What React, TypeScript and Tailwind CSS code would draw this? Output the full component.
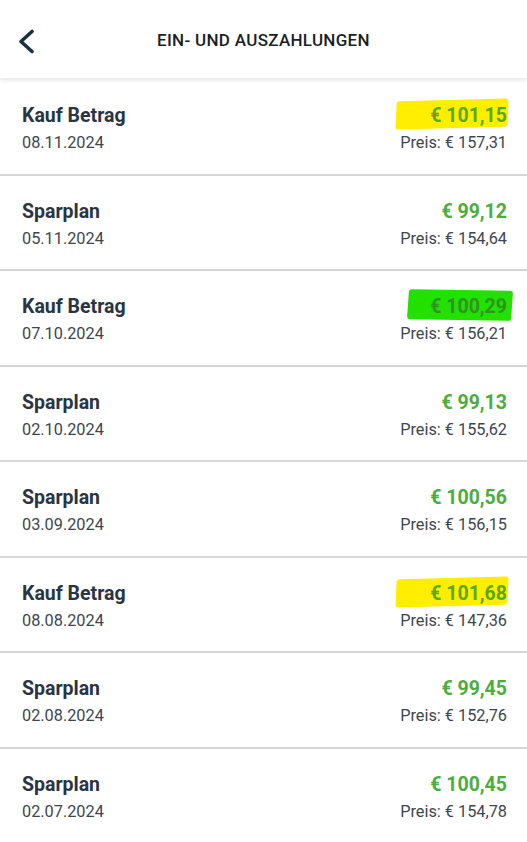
type Tx = {
  title: string;
  date: string;
  amount: string;
  price: string;
  mark?: "yellow" | "green";
};

const ROWS: Tx[] = [
  { title: "Kauf Betrag", date: "08.11.2024", amount: "€ 101,15", price: "Preis: € 157,31", mark: "yellow" },
  { title: "Sparplan", date: "05.11.2024", amount: "€ 99,12", price: "Preis: € 154,64" },
  { title: "Kauf Betrag", date: "07.10.2024", amount: "€ 100,29", price: "Preis: € 156,21", mark: "green" },
  { title: "Sparplan", date: "02.10.2024", amount: "€ 99,13", price: "Preis: € 155,62" },
  { title: "Sparplan", date: "03.09.2024", amount: "€ 100,56", price: "Preis: € 156,15" },
  { title: "Kauf Betrag", date: "08.08.2024", amount: "€ 101,68", price: "Preis: € 147,36", mark: "yellow" },
  { title: "Sparplan", date: "02.08.2024", amount: "€ 99,45", price: "Preis: € 152,76" },
  { title: "Sparplan", date: "02.07.2024", amount: "€ 100,45", price: "Preis: € 154,78" },
];

function Amount({ tx }: { tx: Tx }) {
  const color =
    tx.mark === "green" ? "text-[#2f9420]" : tx.mark === "yellow" ? "text-[#5aa912]" : "text-[#4cad3f]";
  return (
    <span className={`relative inline-block text-[19.5px] font-bold leading-6 ${color}`}>
      {tx.mark === "yellow" && (
        <span className="absolute -left-[34px] -right-[1px] -top-[4px] -bottom-[0px] bg-[#ffee00] rounded-[3px] -rotate-[1.5deg] skew-x-[-4deg]" />
      )}
      {tx.mark === "green" && (
        <span className="absolute -left-[22px] -right-[5px] -top-[5px] -bottom-[1px] bg-[#22e000] rounded-[3px] rotate-[1deg] skew-x-[-3deg]" />
      )}
      <span className="relative">{tx.amount}</span>
    </span>
  );
}

export default function App() {
  return (
    <div
      className="w-[527px] min-h-[842px] bg-white overflow-hidden"
      style={{ fontFamily: "Roboto, 'Noto Sans', sans-serif" }}
    >
      <header className="relative h-[79px] flex items-center justify-center shadow-[0_2px_4px_rgba(0,0,0,0.08)] border-b border-[#ececec]">
        <button className="absolute left-[17px] top-[29px] text-[#1c2f45]">
          <svg width="20" height="25" viewBox="0 0 20 25" fill="none">
            <polyline
              points="15,2.5 4,12.5 15,22.5"
              stroke="currentColor"
              strokeWidth="3.6"
              strokeLinecap="round"
              strokeLinejoin="round"
            />
          </svg>
        </button>
        <h1 className="text-[17px] font-medium text-[#1b1f24] tracking-[0.3px] mt-[3px]">
          EIN- UND AUSZAHLUNGEN
        </h1>
      </header>
      <div className="mt-[1px]">
        {ROWS.map((tx, i) => (
          <div
            key={i}
            className="h-[95.5px] flex items-center justify-between pl-[22px] pr-[20px] pt-[4px] border-b-2 border-[#d4d6da]"
          >
            <div className="flex flex-col gap-[5px]">
              <span className="text-[19.5px] font-bold leading-6 text-[#2a3443]">{tx.title}</span>
              <span className="text-[16.3px] leading-5 text-[#3d4650]">{tx.date}</span>
            </div>
            <div className="flex flex-col items-end gap-[5px]">
              <Amount tx={tx} />
              <span className="text-[16.3px] leading-5 text-[#3d4650]">{tx.price}</span>
            </div>
          </div>
        ))}
      </div>
    </div>
  );
}
